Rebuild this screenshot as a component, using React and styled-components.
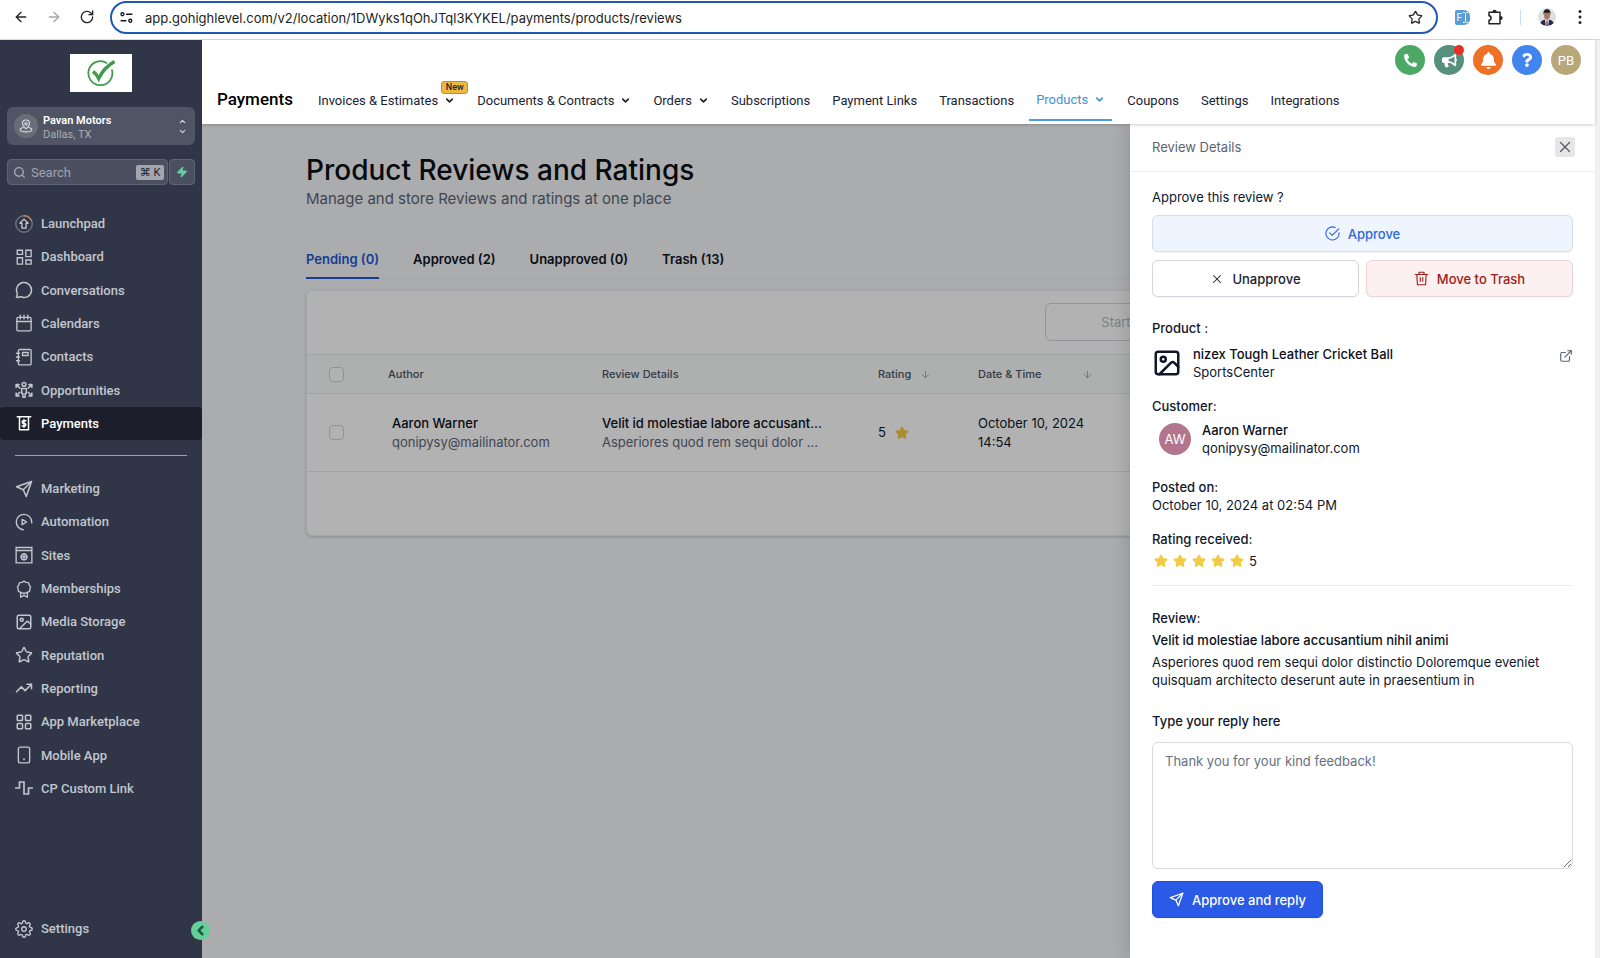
import React from 'react';
import styled, { createGlobalStyle, css } from 'styled-components';
import {
  ArrowDown,
  ArrowLeft,
  ArrowRight,
  CalendarDays,
  ChevronDown,
  ChevronLeft,
  ChevronUp,
  ExternalLink,
  Image as ImageIcon,
  LayoutGrid,
  MessageCircle,
  Search,
  Star,
  TrendingUp,
  X,
  Zap,
} from 'lucide-react';
import { FaBell, FaBullhorn, FaPhoneAlt, FaQuestion } from 'react-icons/fa';
import { FiSend, FiSettings } from 'react-icons/fi';

const inter = `Inter, 'Liberation Sans', sans-serif`;
const roboto = `Roboto, 'Liberation Sans', sans-serif`;

const GlobalStyle = createGlobalStyle`
  * {
    box-sizing: border-box;
  }
  body {
    margin: 0;
    font-family: ${inter};
    color: #10172b;
  }
  button, input, textarea {
    font-family: inherit;
    margin: 0;
  }
  button {
    cursor: pointer;
  }
  a {
    color: inherit;
    text-decoration: none;
  }
  h1, h2, p {
    margin: 0;
  }
`;

const Page = styled.div`
  display: flex;
  flex-direction: column;
  min-height: 100vh;
`;

/* ---------- Browser bar ---------- */

const BrowserBar = styled.div`
  display: flex;
  align-items: center;
  height: 40px;
  padding: 0 3px 5px 8px;
  border-bottom: 1px solid #d9dade;
  background: #fff;
`;

const BrowserButton = styled.button`
  display: flex;
  align-items: center;
  justify-content: center;
  width: ${(props) => props.$width || 33}px;
  height: 28px;
  padding: 0;
  border: 0;
  background: none;
  color: ${(props) => (props.$faded ? '#a6a6a8' : '#222326')};
`;

const AddressBar = styled.div`
  display: flex;
  align-items: center;
  flex: 1;
  height: 33px;
  margin: 1px 8px 0 10px;
  padding: 0 13px 0 8px;
  border: 2px solid #2158b5;
  border-radius: 17px;
`;

const AddressInput = styled.input`
  flex: 1;
  padding: 0 0 0 12px;
  border: 0;
  outline: 0;
  background: none;
  font-size: 13px;
  color: #1d1e21;
`;

const Divider = styled.span`
  width: 1px;
  height: 15px;
  margin: 0 9px 0 8px;
  background: #c6dafc;
`;

/* ---------- Sidebar ---------- */

const Body = styled.div`
  display: flex;
  flex: 1;
`;

const Sidebar = styled.aside`
  position: relative;
  z-index: 3;
  display: flex;
  flex-direction: column;
  flex: none;
  width: 202px;
  padding: 14px 0 13px;
  background: #303647;
  color: #c3c6cf;
  font-family: ${roboto};
`;

const Logo = styled.div`
  display: flex;
  align-items: center;
  justify-content: center;
  align-self: center;
  width: 62px;
  height: 38px;
  background: #fff;
`;

const LocationButton = styled.button`
  display: flex;
  align-items: center;
  height: 38px;
  margin: 15px 7px 0;
  padding: 0 8px 0 7px;
  border: 0;
  border-radius: 6px;
  background: #4f5564;
  color: #d6d8de;
  text-align: left;
`;

const LocationIcon = styled.span`
  display: flex;
  align-items: center;
  justify-content: center;
  width: 24px;
  height: 24px;
  margin-right: 5px;
  border-radius: 50%;
  background: #686d7a;
`;

const LocationText = styled.span`
  display: flex;
  flex-direction: column;
  flex: 1;
  padding-top: 3px;
  font-size: 11px;
  line-height: 14px;
  color: #a9adb7;

  strong {
    font-weight: 600;
    color: #fff;
  }
`;

const Stepper = styled.span`
  display: flex;
  flex-direction: column;
  gap: 1px;
`;

const SearchRow = styled.div`
  display: flex;
  gap: 1px;
  margin: 14px 7px 0;
`;

const searchPart = css`
  display: flex;
  align-items: center;
  height: 26px;
  border: 1px solid #5e6473;
  border-radius: 4px;
  background: #4a505f;
`;

const SearchBox = styled.label`
  ${searchPart}
  flex: 1;
  min-width: 0;
  padding: 0 3px 0 5px;
  color: #a6aab5;
`;

const SearchInput = styled.input`
  flex: 1;
  min-width: 0;
  padding: 0 0 0 5px;
  border: 0;
  background: none;
  font-size: 13px;
  color: #fff;

  &::placeholder {
    color: #a0a4af;
    opacity: 1;
  }
`;

const Shortcut = styled.kbd`
  width: 28px;
  border-radius: 2px;
  background: #a3a6af;
  color: #1f2430;
  font-family: ${roboto}, 'DejaVu Sans';
  font-size: 11px;
  line-height: 15px;
  text-align: center;
  white-space: nowrap;
`;

const BoltButton = styled.button`
  ${searchPart}
  justify-content: center;
  width: 26px;
  padding: 0;
  color: #5fd39b;
`;

const SideNav = styled.nav`
  display: grid;
  min-height: ${(props) => props.$minHeight}px;
  margin-top: ${(props) => props.$gap}px;
`;

const SideLink = styled.a`
  display: flex;
  align-items: center;
  gap: 8px;
  min-height: 33px;
  padding-left: 15px;
  border-radius: 4px;
  background: ${(props) => (props.$active ? '#1c1f2b' : 'transparent')};
  color: ${(props) => (props.$active ? '#fff' : '#c3c6cf')};
  font-size: 13px;
  font-weight: 500;

  svg {
    flex: none;
  }
`;

const SideRule = styled.hr`
  width: 172px;
  height: 1px;
  margin: 15px 0 0 15px;
  border: 0;
  background: #9ea2ae;
`;

const SideFooter = styled.div`
  margin-top: auto;
`;

const CollapseButton = styled.button`
  position: absolute;
  right: -8px;
  bottom: 18px;
  display: flex;
  align-items: center;
  justify-content: center;
  width: 19px;
  height: 19px;
  padding: 0;
  border: 0;
  border-radius: 50%;
  background: #65cf98;
  color: #1d5c4a;
`;

/* ---------- Header ---------- */

const Main = styled.div`
  display: flex;
  flex-direction: column;
  flex: 1;
  min-width: 0;
  border-right: 5px solid #eff1f5;
`;

const Header = styled.header`
  position: relative;
  z-index: 2;
  height: 84px;
  background: #fff;
  box-shadow: 0 1px 3px rgba(0, 0, 0, 0.2);
  font-family: ${roboto};
`;

const UserActions = styled.div`
  display: flex;
  justify-content: flex-end;
  gap: 9px;
  padding: 5px 14px 0 0;
`;

const RoundButton = styled.button`
  position: relative;
  display: flex;
  align-items: center;
  justify-content: center;
  width: 30px;
  height: 30px;
  padding: 0;
  border: 0;
  border-radius: 50%;
  background: ${(props) => props.$color};
  color: #fff;
  font-size: 13px;
`;

const AlertDot = styled.span`
  position: absolute;
  top: 0;
  right: 0;
  width: 10px;
  height: 10px;
  border-radius: 50%;
  background: #ee2b24;
`;

const TopNav = styled.nav`
  display: flex;
  align-items: center;
  height: 48px;
  padding-left: 15px;
`;

const NavTitle = styled.h2`
  margin-right: 18px;
  font-size: 17px;
  font-weight: 500;
  line-height: 20px;
  color: #000;
`;

const TopLink = styled.a`
  position: relative;
  display: flex;
  align-items: center;
  gap: 6px;
  height: 43px;
  margin-right: 8px;
  padding: 3px 7px 0;
  color: #1a2233;
  font-size: 13px;
  white-space: nowrap;

  ${(props) => props.$active && css`
    border-bottom: 2px solid #4b9fdb;
    color: #3f92d2;
  `}
`;

const NewBadge = styled.span`
  position: absolute;
  top: 3px;
  right: -6px;
  width: 27px;
  border: 1px solid #b8923a;
  border-radius: 3px;
  background: #ecb93f;
  color: #1a2233;
  font-size: 9px;
  font-weight: 500;
  line-height: 11px;
  text-align: center;
`;

/* ---------- Reviews page ---------- */

const Stage = styled.main`
  position: relative;
  flex: 1;
  overflow: hidden;
  background: #f4f6fa;
`;

const Content = styled.section`
  padding: 29px 104px;
`;

const PageTitle = styled.h1`
  font-size: 28px;
  font-weight: 500;
  line-height: 34px;
  color: #0a0d14;
`;

const Subtitle = styled.p`
  margin-top: 2px;
  font-size: 15px;
  line-height: 20px;
  color: #5d6576;
`;

const Tabs = styled.div`
  display: flex;
  gap: 34px;
  margin-top: 31px;
  border-bottom: 1px solid #eaecf0;
`;

const Tab = styled.button`
  height: 39px;
  margin-bottom: -1px;
  padding: 0;
  border: 0;
  border-bottom: 2px solid ${(props) => (props.$active ? '#2456d6' : 'transparent')};
  background: none;
  color: ${(props) => (props.$active ? '#2456d6' : '#10141f')};
  font-size: 13px;
  font-weight: 600;
`;

const Card = styled.div`
  margin-top: 11px;
  padding-bottom: 63px;
  border: 1px solid #eaecef;
  border-radius: 6px;
  background: #fff;
  box-shadow: 0 1px 3px rgba(16, 24, 40, 0.2);
`;

const Toolbar = styled.div`
  display: flex;
  justify-content: flex-end;
  height: 63px;
  padding: 12px 16px;
`;

const DateRange = styled.div`
  display: flex;
  align-items: center;
  justify-content: space-between;
  width: 429px;
  height: 38px;
  padding-right: 14px;
  border: 1px solid #d2d6dc;
  border-radius: 6px;
`;

const DateInput = styled.input`
  width: 172px;
  border: 0;
  background: none;
  font-size: 13px;
  text-align: center;

  &::placeholder {
    color: #b5b9c0;
    opacity: 1;
  }
`;

const Table = styled.table`
  width: 100%;
  border-collapse: collapse;
  table-layout: fixed;
  font-size: 13px;
  line-height: 19px;
`;

const Th = styled.th`
  width: ${(props) => (props.$width ? `${props.$width}px` : 'auto')};
  height: 39px;
  padding: 0 0 0 ${(props) => props.$indent || 0}px;
  border-top: 1px solid #e6e8eb;
  border-bottom: 1px solid #e6e8eb;
  background: #fafcfb;
  color: #4b5465;
  font-size: 11px;
  font-weight: 500;
  text-align: left;
`;

const Sortable = styled.span`
  display: flex;
  align-items: center;
  gap: ${(props) => props.$gap}px;

  svg {
    color: #a2a6ad;
  }
`;

const Td = styled.td`
  height: 78px;
  padding: 0 0 0 ${(props) => props.$indent || 0}px;
  border-bottom: 1px solid #e6e8eb;
`;

const Checkbox = styled.input.attrs({ type: 'checkbox' })`
  display: block;
  appearance: none;
  width: 15px;
  height: 15px;
  margin: 0;
  border: 1px solid #cdd1d8;
  border-radius: 4px;
  background: #fff;
`;

const Strong = styled.div`
  font-weight: 500;
  color: #0b0f1a;
`;

const Muted = styled.div`
  color: #5d6576;
`;

const RatingCell = styled.div`
  display: flex;
  align-items: center;
  gap: 9px;
`;

const Mask = styled.div`
  position: absolute;
  inset: 0;
  background: rgba(0, 0, 0, 0.3);
`;

/* ---------- Drawer ---------- */

const Drawer = styled.aside`
  position: absolute;
  top: 0;
  right: 0;
  bottom: 0;
  width: 465px;
  background: #fff;
  box-shadow: -2px 0 16px rgba(0, 0, 0, 0.16);
  font-size: 13px;
  line-height: 18px;
  color: #10172b;
`;

const DrawerHeader = styled.div`
  display: flex;
  align-items: center;
  justify-content: space-between;
  height: 48px;
  padding: 0 20px 2px 22px;
  border-bottom: 1px solid #eeeff2;
  color: #5b6372;
`;

const CloseButton = styled.button`
  display: flex;
  align-items: center;
  justify-content: center;
  width: 20px;
  height: 20px;
  padding: 0;
  border: 0;
  border-radius: 3px;
  background: #e6e6e6;
  color: #55585e;
`;

const DrawerBody = styled.div`
  display: flex;
  flex-direction: column;
  padding: 16px 22px;
`;

const Label = styled.div`
  margin-top: ${(props) => props.$top || 0}px;
  font-weight: ${(props) => (props.$regular ? 400 : 500)};
`;

const ActionRow = styled.div`
  display: flex;
  gap: 7px;
  margin-top: ${(props) => props.$top || 8}px;
`;

const tones = {
  plain: { border: '#d3d6dc', background: '#fff', color: '#1a2133' },
  info: { border: '#d5dfeb', background: '#eef5fe', color: '#2f66d8' },
  danger: { border: '#ecd5d6', background: '#fdf0f0', color: '#9f1c17' },
  primary: { border: '#1f4fdc', background: '#2a5ae6', color: '#fff' },
};

const ActionButton = styled.button`
  display: flex;
  align-items: center;
  justify-content: center;
  gap: 8px;
  flex: 1;
  height: 37px;
  padding: 0 16px;
  border: 1px solid ${(props) => tones[props.$tone].border};
  border-radius: 6px;
  background: ${(props) => tones[props.$tone].background};
  box-shadow: 0 1px 2px rgba(16, 24, 40, 0.05);
  color: ${(props) => tones[props.$tone].color};
  font-size: 13px;
  font-weight: 500;
`;

const ReplyButton = styled(ActionButton)`
  flex: none;
  align-self: flex-start;
  margin-top: 12px;
`;

const Entry = styled.div`
  display: flex;
  align-items: center;
  gap: 11px;
  margin-top: ${(props) => props.$top}px;
  padding-left: ${(props) => props.$indent}px;
`;

const EntryText = styled.div`
  flex: 1;
`;

const ProductLink = styled.a`
  align-self: flex-start;
  padding-top: 4px;
  color: #5b6372;
`;

const Avatar = styled.span`
  width: 32px;
  height: 32px;
  border-radius: 50%;
  background: #b2758c;
  color: #fff;
  line-height: 32px;
  text-align: center;
`;

const Stars = styled.div`
  display: flex;
  align-items: center;
  gap: 5px;
  margin-top: 4px;
  padding-left: 2px;
`;

const Separator = styled.hr`
  width: 100%;
  height: 1px;
  margin: 15px 0 23px;
  border: 0;
  background: #ebecef;
`;

const Paragraph = styled.p`
  margin-top: 4px;
`;

const ReplyLabel = styled.label`
  margin-top: 23px;
  font-weight: 500;
`;

const ReplyBox = styled.textarea`
  height: 127px;
  margin-top: 12px;
  padding: 9px 12px;
  border: 1px solid #d7dae0;
  border-radius: 6px;
  font-size: 13px;
  line-height: 19px;
  resize: vertical;

  &::placeholder {
    color: #667080;
    opacity: 1;
  }
`;

/* ---------- Drawn icons ---------- */

const Glyph = ({ size = 18, width = 1.8, children }) => (
  <svg
    width={size}
    height={size}
    viewBox="0 0 24 24"
    fill="none"
    stroke="currentColor"
    strokeWidth={width}
    strokeLinecap="round"
    strokeLinejoin="round"
    aria-hidden="true"
  >
    {children}
  </svg>
);

const ReloadIcon = () => (
  <Glyph size={16} width={2}>
    <path d="M20.5 12a8.5 8.5 0 1 1-2.6-6.1l2.3 2.3" />
    <path d="M20.5 3v5.5H15" />
  </Glyph>
);

const TuneIcon = () => (
  <Glyph size={13} width={2.4}>
    <circle cx="4.500" cy="6" r="2.800" />
    <path d="M12 6h10M2 18h9" />
    <circle cx="19" cy="18" r="2.800" />
  </Glyph>
);

const PuzzleIcon = () => (
  <svg width="17" height="17" viewBox="0 0 17 17" fill="none" stroke="#222326" strokeWidth="1.5" strokeLinejoin="round">
    <path d="M2 3.300h11v11.400H2v-3.500c2.800-.2 2.800-4.300 0-4.500z" />
    <path d="M6.300 2.700a1.300 1.300 0 0 1 2.600 0zM13.600 7.700a1.300 1.300 0 0 1 0 2.600z" fill="#222326" />
  </svg>
);

const MoreIcon = () => (
  <svg width="4" height="16" viewBox="0 0 4 16" fill="#222326">
    <circle cx="2" cy="2.5" r="1.5" />
    <circle cx="2" cy="8" r="1.5" />
    <circle cx="2" cy="13.5" r="1.5" />
  </svg>
);

const ExtensionTile = styled.span`
  display: flex;
  align-items: center;
  justify-content: center;
  gap: 1px;
  width: 15px;
  height: 15px;
  border-radius: 2px 6px 6px 2px;
  background: #5a9fd4;
  color: #fff;
  font-size: 10px;
`;

const CursorIcon = () => (
  <svg width="5" height="11" viewBox="0 0 5 11" fill="none" stroke="#fff">
    <path d="M0 .5h1.5l1 1 1-1H5M2.5 1.5v8M0 10.5h1.5l1-1 1 1H5" />
  </svg>
);

const ProfilePhoto = () => (
  <svg width="18" height="18" viewBox="0 0 18 18" aria-hidden="true">
    <circle cx="9" cy="9" r="9" fill="#dddfe1" />
    <path d="M2.3 15c.8-2.2 2.5-3 4.5-3.3h4.4c2 .3 3.7 1.1 4.5 3.3A9 9 0 0 1 9 18a9 9 0 0 1-6.7-3z" fill="#23294a" />
    <path d="M7 11.5h4L10.3 18H7.7z" fill="#e6e3ea" />
    <path d="M8.5 12.5h1.1l.3 5.5H8.2z" fill="#a8324a" />
    <ellipse cx="9" cy="7.5" rx="3" ry="4" fill="#a87862" />
    <path d="M5.7 7C5 3 6.5 1.2 9 1.2S13 3 12.3 7c-.4-1.8-.8-2.3-1.500-2.500-1.300.3-2.700.2-3.700 0-.7.4-1.100 1-1.400 2.500z" fill="#1d1a1d" />
  </svg>
);

const LogoMark = () => (
  <svg width="28" height="28" viewBox="0 0 28 28" fill="none" stroke="#3f9b4b">
    <path d="M20 4.200A12 12 0 1 0 24.800 10.500" strokeWidth="1.800" />
    <path d="M6 12.500c2.300 1.500 4.200 4 5.700 7C15 12.500 19.500 7 27.500 2.500" strokeWidth="3.400" />
  </svg>
);

const LocationPin = () => (
  <Glyph size={14} width={2}>
    <path d="M12 17c4-4 6-6.500 6-9.300A6 6 0 0 0 6 7.700C6 10.500 8 13 12 17z" />
    <circle cx="12" cy="8" r="2" />
    <path d="M7 14.500c-3 .7-5 1.500-5 3.300 0 2.400 4.500 4.200 10 4.200s10-1.800 10-4.200c0-1.800-2-2.600-5-3.300" />
  </Glyph>
);

const LaunchpadIcon = () => (
  <Glyph>
    <circle cx="12" cy="12" r="11" stroke="#6d7382" />
    <path d="M12 1a11 11 0 0 1 9.800 6" stroke="#c9824e" />
    <path d="M12 5.500l5.500 5.500h-2.700v6.500H9.200V11H6.500z" />
  </Glyph>
);

const DashboardIcon = () => (
  <Glyph>
    <path d="M3 3h7v5.500H3zM14.500 3h7v8.500h-7zM3 13h7v8.500H3zM14.500 16h7v5.500h-7z" strokeLinejoin="miter" />
  </Glyph>
);

const ContactsIcon = () => (
  <Glyph>
    <rect x="4.500" y="2" width="17" height="20.500" rx="2" />
    <path d="M2 7h4M2 12h4M2 17h4" />
    <rect x="10" y="6" width="7.500" height="4" />
  </Glyph>
);

const OpportunitiesIcon = () => (
  <Glyph width={2}>
    <circle cx="12" cy="4.500" r="2.500" />
    <path d="M9 10h6v6.500h-1.500V21.500h-3v-5H9z" />
    <path d="M1.500 8.500V4.500h4M2 5l4.500 4.500M22.500 8.500V4.500h-4M22 5l-4.500 4.500M1.500 16v4h4M2 19.500L6.500 15M22.500 16v4h-4M22 19.500L17.500 15" />
  </Glyph>
);

const PaymentsIcon = () => (
  <Glyph width={2}>
    <path d="M3 3.500h18M6 4v17h12V4" />
    <path d="M14.500 9h-3.200a1.700 1.700 0 0 0 0 3.500h1.400a1.700 1.700 0 0 1 0 3.500H9.500M12 7.500v10" />
  </Glyph>
);

const AutomationIcon = () => (
  <Glyph>
    <path d="M11 22.300A10.300 10.300 0 1 1 22.300 12v1.200" />
    <path d="M9.500 8.500v7l6-3.500z" />
  </Glyph>
);

const SitesIcon = () => (
  <Glyph>
    <path d="M1.500 2h21v20.500h-21zM1.500 6h21" strokeLinejoin="miter" />
    <circle cx="12" cy="14.500" r="3.800" />
    <path d="M8 14.500h8M12 10.500v8" />
  </Glyph>
);

const MembershipsIcon = () => (
  <Glyph>
    <path d="M12 1.500l2.700 1.700 3.200.3.900 3.100 2 2.500-1 3-.4 3.200-3 1.100L12 18l-4.400-1.600-3-1.100-.4-3.200-1-3 2-2.500.9-3.100 3.200-.3z" />
    <path d="M7.500 16.500V23l4.500-2.500 4.500 2.500v-6.500" />
  </Glyph>
);

const MobileIcon = () => (
  <Glyph>
    <rect x="4.500" y="1.500" width="15" height="21" rx="2.500" />
    <path d="M12 17.500v.2" strokeWidth="2.500" />
  </Glyph>
);

const PulseIcon = () => (
  <Glyph width={2.2}>
    <path d="M0 12h6V4h6v16h6v-8h6" strokeLinejoin="miter" />
  </Glyph>
);

const ApprovedIcon = () => (
  <Glyph size={15}>
    <path d="M22.500 11v1A10.500 10.500 0 1 1 16.300 2.400" />
    <path d="M7.500 11l4 4L22 4.500" />
  </Glyph>
);

const TrashIcon = () => (
  <Glyph size={15} width={1.800}>
    <path d="M2 5.500h20M8 5V2h8v3M4.500 5.500L5.500 22h13l1-16.500M10 10.500v6M14 10.500v6" />
  </Glyph>
);

/* ---------- Data ---------- */

const primaryLinks = [
  { label: 'Launchpad', icon: <LaunchpadIcon /> },
  { label: 'Dashboard', icon: <DashboardIcon /> },
  { label: 'Conversations', icon: <MessageCircle size={18} /> },
  { label: 'Calendars', icon: <Glyph><rect x="2.5" y="4.5" width="19" height="18" rx="2" /><path d="M2.5 10h19M7 1.5v5M12 1.5v5M17 1.5v5" /></Glyph> },
  { label: 'Contacts', icon: <ContactsIcon /> },
  { label: 'Opportunities', icon: <OpportunitiesIcon /> },
  { label: 'Payments', icon: <PaymentsIcon />, active: true },
];

const secondaryLinks = [
  { label: 'Marketing', icon: <FiSend size={18} /> },
  { label: 'Automation', icon: <AutomationIcon /> },
  { label: 'Sites', icon: <SitesIcon /> },
  { label: 'Memberships', icon: <MembershipsIcon /> },
  { label: 'Media Storage', icon: <ImageIcon size={18} /> },
  { label: 'Reputation', icon: <Star size={18} /> },
  { label: 'Reporting', icon: <TrendingUp size={18} /> },
  { label: 'App Marketplace', icon: <LayoutGrid size={18} /> },
  { label: 'Mobile App', icon: <MobileIcon /> },
  { label: 'CP Custom Link', icon: <PulseIcon /> },
];

const topLinks = [
  { label: 'Invoices & Estimates', menu: true, isNew: true },
  { label: 'Documents & Contracts', menu: true },
  { label: 'Orders', menu: true },
  { label: 'Subscriptions' },
  { label: 'Payment Links' },
  { label: 'Transactions' },
  { label: 'Products', menu: true, active: true },
  { label: 'Coupons' },
  { label: 'Settings' },
  { label: 'Integrations' },
];

const tabs = ['Pending (0)', 'Approved (2)', 'Unapproved (0)', 'Trash (13)'];

const GoldStar = () => <Star size={14} fill="#f3cb45" color="#f3cb45" />;

const SideLinks = ({ links, minHeight, gap }) => (
  <SideNav $minHeight={minHeight} $gap={gap}>
    {links.map((link) => (
      <SideLink key={link.label} href="#" $active={link.active}>
        {link.icon}
        {link.label}
      </SideLink>
    ))}
  </SideNav>
);

const Browser = () => (
  <BrowserBar>
    <BrowserButton aria-label="Back" $width={26}><ArrowLeft size={16} /></BrowserButton>
    <BrowserButton aria-label="Forward" $width={40} $faded><ArrowRight size={16} /></BrowserButton>
    <BrowserButton aria-label="Reload" $width={26}><ReloadIcon /></BrowserButton>
    <AddressBar>
      <TuneIcon />
      <AddressInput
        aria-label="Address"
        defaultValue="app.gohighlevel.com/v2/location/1DWyks1qOhJTql3KYKEL/payments/products/reviews"
      />
      <Star size={15} color="#222326" />
    </AddressBar>
    <BrowserButton aria-label="Text extension">
      <ExtensionTile>F<CursorIcon /></ExtensionTile>
    </BrowserButton>
    <BrowserButton aria-label="Extensions"><PuzzleIcon /></BrowserButton>
    <Divider />
    <BrowserButton aria-label="Profile"><ProfilePhoto /></BrowserButton>
    <BrowserButton aria-label="Menu" $width={34}><MoreIcon /></BrowserButton>
  </BrowserBar>
);

const AppSidebar = () => (
  <Sidebar>
    <Logo><LogoMark /></Logo>
    <LocationButton>
      <LocationIcon><LocationPin /></LocationIcon>
      <LocationText>
        <strong>Pavan Motors</strong>
        <span>Dallas, TX</span>
      </LocationText>
      <Stepper>
        <ChevronUp size={9} strokeWidth={3} />
        <ChevronDown size={9} strokeWidth={3} />
      </Stepper>
    </LocationButton>
    <SearchRow>
      <SearchBox>
        <Search size={13} strokeWidth={2.5} />
        <SearchInput placeholder="Search" aria-label="Search" />
        <Shortcut>⌘ K</Shortcut>
      </SearchBox>
      <BoltButton aria-label="Quick actions"><Zap size={12} fill="currentColor" /></BoltButton>
    </SearchRow>
    <SideLinks links={primaryLinks} minHeight={233} gap={22} />
    <SideRule />
    <SideLinks links={secondaryLinks} minHeight={333} gap={16} />
    <SideFooter>
      <SideLink href="#">
        <FiSettings size={18} strokeWidth={1.8} />
        Settings
      </SideLink>
    </SideFooter>
    <CollapseButton aria-label="Collapse menu"><ChevronLeft size={15} strokeWidth={4} /></CollapseButton>
  </Sidebar>
);

const AppHeader = () => (
  <Header>
    <UserActions>
      <RoundButton aria-label="Call" $color="#4ba865"><FaPhoneAlt size={13} /></RoundButton>
      <RoundButton aria-label="Announcements" $color="#578f7d">
        <FaBullhorn size={15} />
        <AlertDot />
      </RoundButton>
      <RoundButton aria-label="Notifications" $color="#ee7128"><FaBell size={17} /></RoundButton>
      <RoundButton aria-label="Help" $color="#4285ee"><FaQuestion size={14} /></RoundButton>
      <RoundButton $color="#b8a878">PB</RoundButton>
    </UserActions>
    <TopNav>
      <NavTitle>Payments</NavTitle>
      {topLinks.map((link) => (
        <TopLink key={link.label} href="#" $active={link.active}>
          {link.label}
          {link.menu && <ChevronDown size={11} strokeWidth={3.5} />}
          {link.isNew && <NewBadge>New</NewBadge>}
        </TopLink>
      ))}
    </TopNav>
  </Header>
);

const ReviewsPage = () => (
  <Content>
    <PageTitle>Product Reviews and Ratings</PageTitle>
    <Subtitle>Manage and store Reviews and ratings at one place</Subtitle>
    <Tabs>
      {tabs.map((tab, i) => (
        <Tab key={tab} $active={i === 0}>{tab}</Tab>
      ))}
    </Tabs>
    <Card>
      <Toolbar>
        <DateRange>
          <DateInput placeholder="Start Date" aria-label="Start date" />
          <ArrowRight size={14} color="#b5b9c0" />
          <DateInput placeholder="End Date" aria-label="End date" />
          <CalendarDays size={14} color="#b5b9c0" />
        </DateRange>
      </Toolbar>
      <Table>
        <thead>
          <tr>
            <Th $width={81} $indent={22}><Checkbox aria-label="Select all" /></Th>
            <Th $width={214}>Author</Th>
            <Th $width={276}>Review Details</Th>
            <Th $width={100}><Sortable $gap={9}>Rating <ArrowDown size={11} /></Sortable></Th>
            <Th $width={160}><Sortable $gap={40}>Date &amp; Time <ArrowDown size={11} /></Sortable></Th>
            <Th />
          </tr>
        </thead>
        <tbody>
          <tr>
            <Td $indent={22}><Checkbox aria-label="Select review" /></Td>
            <Td $indent={4}>
              <Strong>Aaron Warner</Strong>
              <Muted>qonipysy@mailinator.com</Muted>
            </Td>
            <Td>
              <Strong>Velit id molestiae labore accusant...</Strong>
              <Muted>Asperiores quod rem sequi dolor ...</Muted>
            </Td>
            <Td><RatingCell>5 <GoldStar /></RatingCell></Td>
            <Td>October 10, 2024<br />14:54</Td>
            <Td />
          </tr>
        </tbody>
      </Table>
    </Card>
  </Content>
);

const ReviewDrawer = () => (
  <Drawer>
    <DrawerHeader>
      Review Details
      <CloseButton aria-label="Close"><X size={18} strokeWidth={1.6} /></CloseButton>
    </DrawerHeader>
    <DrawerBody>
      <Label $regular>Approve this review ?</Label>
      <ActionRow $top={9}>
        <ActionButton $tone="info"><ApprovedIcon /> Approve</ActionButton>
      </ActionRow>
      <ActionRow>
        <ActionButton $tone="plain"><X size={14} strokeWidth={1.8} /> Unapprove</ActionButton>
        <ActionButton $tone="danger"><TrashIcon /> Move to Trash</ActionButton>
      </ActionRow>

      <Label $top={22}>Product :</Label>
      <Entry $top={8}>
        <ImageIcon size={30} />
        <EntryText>
          <Strong>nizex Tough Leather Cricket Ball</Strong>
          SportsCenter
        </EntryText>
        <ProductLink href="#" aria-label="Open product"><ExternalLink size={14} /></ProductLink>
      </Entry>

      <Label $top={16}>Customer:</Label>
      <Entry $top={6} $indent={7}>
        <Avatar>AW</Avatar>
        <EntryText>
          <Strong>Aaron Warner</Strong>
          qonipysy@mailinator.com
        </EntryText>
      </Entry>

      <Label $top={21}>Posted on:</Label>
      <div>October 10, 2024 at 02:54 PM</div>

      <Label $top={16}>Rating received:</Label>
      <Stars>
        <GoldStar />
        <GoldStar />
        <GoldStar />
        <GoldStar />
        <GoldStar />
        <span>5</span>
      </Stars>

      <Separator />

      <Label>Review:</Label>
      <Paragraph as={Strong}>Velit id molestiae labore accusantium nihil animi</Paragraph>
      <Paragraph>
        Asperiores quod rem sequi dolor distinctio Doloremque eveniet quisquam architecto deserunt aute in
        praesentium in
      </Paragraph>

      <ReplyLabel htmlFor="reply">Type your reply here</ReplyLabel>
      <ReplyBox id="reply" placeholder="Thank you for your kind feedback!" />
      <ReplyButton $tone="primary"><FiSend size={15} /> Approve and reply</ReplyButton>
    </DrawerBody>
  </Drawer>
);

const App = () => {
  return (
    <Page>
      <GlobalStyle />
      <Browser />
      <Body>
        <AppSidebar />
        <Main>
          <AppHeader />
          <Stage>
            <ReviewsPage />
            <Mask />
            <ReviewDrawer />
          </Stage>
        </Main>
      </Body>
    </Page>
  );
};

export default App;
